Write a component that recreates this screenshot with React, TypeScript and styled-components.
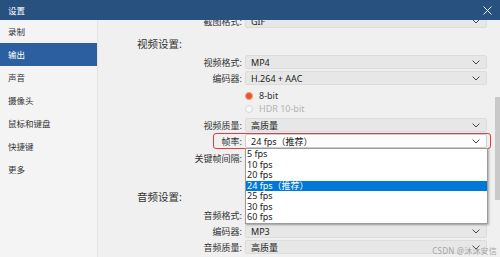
import React from 'react';
import styled, {createGlobalStyle} from 'styled-components';

const GlobalStyle = createGlobalStyle`
  html, body {
    margin: 0;
    padding: 0;
    background: #f0f0f0;
  }
  * {
    box-sizing: border-box;
  }
`;

const navItems = ['录制', '输出', '声音', '摄像头', '鼠标和键盘', '快捷键', '更多'];
const fpsOptions = ['5 fps', '10 fps', '20 fps', '24 fps（推荐）', '25 fps', '30 fps', '60 fps'];

const Chevron: React.FC = () => (
  <svg width="8" height="5" viewBox="0 0 8 5">
    <polyline points="0.6,0.6 4,4 7.4,0.6" fill="none" stroke="#444" strokeWidth="1" />
  </svg>
);

// value is left empty for boxes hidden under the open list
const Select: React.FC<{value?: string; open?: boolean}> = ({value, open}) => (
  <SelectBox $open={open}>
    <span>{value}</span>
    <Chevron />
  </SelectBox>
);

const App: React.FC = () => {
  return (
    <>
      <GlobalStyle />
      <Window>
        <TitleBar>
          <span>设置</span>
          <svg width="9" height="9" viewBox="0 0 9 9">
            <path d="M0.5 0.5 L8.5 8.5 M8.5 0.5 L0.5 8.5" stroke="#fff" strokeWidth="0.9" />
          </svg>
        </TitleBar>

        <Body>
          <Sidebar>
            {navItems.map((item) => (
              <NavItem key={item} $active={item === '输出'}>
                {item}
              </NavItem>
            ))}
          </Sidebar>

          <Main>
            <Viewport>
              <Form>
                <Row $mt={0}>
                  <Label>截图格式:</Label>
                  <Select value="GIF" />
                </Row>

                <Heading $mt={8}>视频设置:</Heading>
                <Row $mt={3}>
                  <Label>视频格式:</Label>
                  <Select value="MP4" />
                </Row>
                <Row>
                  <Label>编码器:</Label>
                  <Select value="H.264 + AAC" />
                </Row>
                <RadioRow $mt={4}>
                  <Radio $checked />
                  <RadioText>8-bit</RadioText>
                </RadioRow>
                <RadioRow $disabled>
                  <Radio />
                  <RadioText>HDR 10-bit</RadioText>
                </RadioRow>
                <Row $mt={3}>
                  <Label>视频质量:</Label>
                  <Select value="高质量" />
                </Row>
                <Row>
                  <Highlight />
                  <Label>帧率:</Label>
                  <Select value="24 fps（推荐）" open />
                  <DropList>
                    {fpsOptions.map((opt) => (
                      <DropItem key={opt} $selected={opt.startsWith('24')}>
                        {opt}
                      </DropItem>
                    ))}
                  </DropList>
                </Row>
                <Row $mt={3}>
                  <Label>关键帧间隔:</Label>
                  <Select />
                </Row>

                <Heading $mt={24}>音频设置:</Heading>
                <Row $mt={3}>
                  <Label>音频格式:</Label>
                  <Select />
                </Row>
                <Row>
                  <Label>编码器:</Label>
                  <Select value="MP3" />
                </Row>
                <Row>
                  <Label>音频质量:</Label>
                  <Select value="高质量" />
                </Row>
              </Form>
            </Viewport>

            <ScrollTrack>
              <ScrollThumb />
            </ScrollTrack>
          </Main>
        </Body>

        <Watermark>CSDN @沐沐安信</Watermark>
      </Window>
    </>
  );
};
export default App;

const Window = styled.div`
  position: relative;
  width: 500px;
  height: 257px;
  display: flex;
  flex-direction: column;
  overflow: hidden;
  background: #f0f0f0;
  font-family: 'Noto Sans', 'Noto Sans CJK SC', sans-serif;
  color: #333;
`;

const TitleBar = styled.div`
  position: relative;
  z-index: 3;
  height: 20px;
  flex-shrink: 0;
  display: flex;
  align-items: center;
  justify-content: space-between;
  padding: 0 8px 0 8px;
  background: #28517f;
  color: #fff;
  font-size: 8.5px;
`;

const Body = styled.div`
  flex: 1;
  display: flex;
  min-height: 0;
`;

const Sidebar = styled.nav`
  width: 98px;
  flex-shrink: 0;
  display: flex;
  flex-direction: column;
  background: #f4f4f4;
  border-right: 1px solid #e4e4e4;
`;

const NavItem = styled.div<{$active?: boolean}>`
  height: 23px;
  line-height: 23px;
  padding-left: 8px;
  font-size: 8.5px;
  color: ${(p) => (p.$active ? '#fff' : '#333')};
  background: ${(p) => (p.$active ? '#2b5f9f' : 'transparent')};
`;

const Main = styled.div`
  flex: 1;
  display: flex;
  min-width: 0;
`;

const Viewport = styled.div`
  flex: 1;
  overflow: hidden;
`;

const Form = styled.div`
  margin-top: -6px;
  display: flex;
  flex-direction: column;
`;

const Row = styled.div<{$mt?: number}>`
  position: relative;
  display: flex;
  align-items: center;
  height: 14px;
  margin-top: ${(p) => p.$mt ?? 2}px;
`;

const Label = styled.div`
  width: 144px;
  margin-right: 3px;
  text-align: right;
  font-size: 9px;
  color: #333;
  white-space: nowrap;
`;

const SelectBox = styled.div<{$open?: boolean}>`
  position: relative;
  z-index: 1;
  width: 242px;
  height: 14px;
  display: flex;
  align-items: center;
  justify-content: space-between;
  padding: 0 6px 0 5px;
  font-size: 9px;
  color: #222;
  background: ${(p) => (p.$open ? '#fcfcfc' : '#e7e7e7')};
  border: 1px solid ${(p) => (p.$open ? '#cfcfcf' : '#dcdcdc')};
  border-radius: 2px;
`;

const Heading = styled.div<{$mt: number}>`
  height: 16px;
  line-height: 16px;
  margin-top: ${(p) => p.$mt}px;
  padding-left: 39px;
  font-size: 10.5px;
  color: #333;
`;

const RadioRow = styled.div<{$mt?: number; $disabled?: boolean}>`
  display: flex;
  align-items: center;
  height: 13px;
  margin-top: ${(p) => p.$mt ?? 0}px;
  padding-left: 147px;
  color: ${(p) => (p.$disabled ? '#b4b4b4' : '#333')};
`;

const Radio = styled.span<{$checked?: boolean}>`
  width: 8px;
  height: 8px;
  border-radius: 50%;
  background: ${(p) => (p.$checked ? '#e8552b' : '#f7f7f7')};
  border: 1px solid ${(p) => (p.$checked ? '#f29a78' : '#d8d8d8')};
`;

const RadioText = styled.span`
  margin-left: 6px;
  font-size: 9px;
`;

const Highlight = styled.div`
  position: absolute;
  top: -1px;
  bottom: -1px;
  left: 115px;
  width: 278px;
  border: 1.5px solid #e23b3d;
  border-radius: 3px;
  z-index: 2;
  pointer-events: none;
`;

const DropList = styled.div`
  position: absolute;
  top: 100%;
  left: 147px;
  z-index: 4;
  width: 243px;
  background: #fff;
  border: 1px solid #9c9c9c;
  box-shadow: 1px 1px 2px rgba(0, 0, 0, 0.3);
`;

const DropItem = styled.div<{$selected?: boolean}>`
  height: 10.5px;
  line-height: 10.5px;
  padding-left: 1px;
  font-size: 9px;
  color: ${(p) => (p.$selected ? '#fff' : '#222')};
  background: ${(p) => (p.$selected ? '#0078d7' : 'transparent')};
`;

const ScrollTrack = styled.div`
  width: 6px;
  flex-shrink: 0;
  padding-top: 77px;
  background: #f0f0f0;
`;

const ScrollThumb = styled.div`
  width: 5px;
  height: 103px;
  margin-left: 1px;
  background: #c9c9c9;
`;

const Watermark = styled.div`
  position: absolute;
  right: 3px;
  bottom: 1px;
  z-index: 5;
  font-size: 8px;
  color: rgba(150, 150, 150, 0.85);
  letter-spacing: 0.2px;
`;
